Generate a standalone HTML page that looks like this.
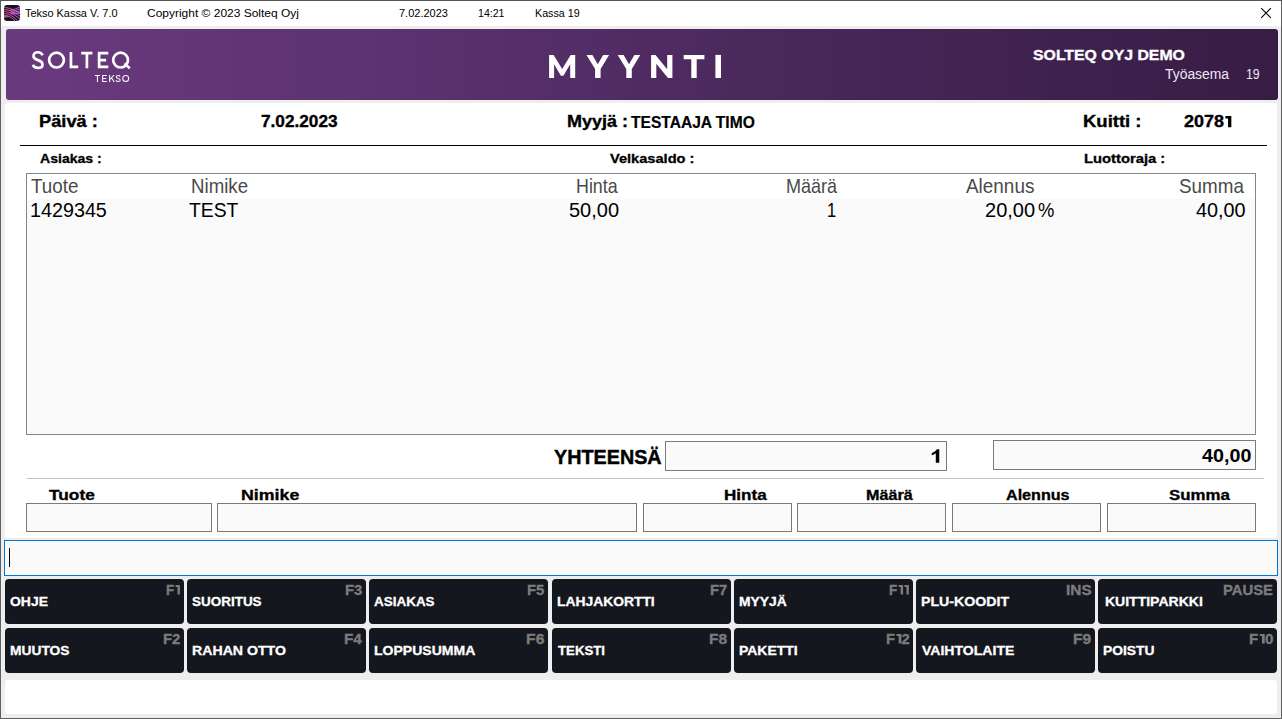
<!DOCTYPE html>
<html>
<head>
<meta charset="utf-8">
<title>Tekso Kassa</title>
<style>
*{box-sizing:border-box;margin:0;padding:0}
html,body{width:1282px;height:719px;overflow:hidden;background:#eee;font-family:"Liberation Sans",sans-serif;}
#win{position:absolute;left:0;top:0;width:1282px;height:719px;background:#eee;border:1px solid #5f5f5f;border-top-color:#555;overflow:hidden}
.abs{position:absolute}
.t{position:absolute;white-space:nowrap;line-height:1;transform-origin:0 0;display:inline-block}
#titlebar{position:absolute;left:0;top:0;width:1280px;height:25px;background:#fff}
#hdr{position:absolute;left:4.5px;top:28px;width:1272px;height:71px;border-radius:3px;background:linear-gradient(90deg,#6a3a7e 0%,#5c3270 30%,#4a285b 60%,#371c44 100%)}
#panel{position:absolute;left:4px;top:102px;width:1272px;height:435px;border-radius:3px;background:#fff}
#list{position:absolute;left:25px;top:172px;width:1230px;height:262px;border:1px solid #828790;background:#fafafa}
#list .hd{position:absolute;left:0;top:0;width:1228px;height:25px;background:#fff}
.box{position:absolute;border:1px solid #7a7a7a;background:#fafafa}
.btn{position:absolute;width:179px;height:45px;border-radius:4px;background:#15171e}
#cmd{position:absolute;left:3px;top:539px;width:1274px;height:36px;border:1px solid #0078d7;background:#fafafa}
#cmd i{position:absolute;left:4px;top:7px;width:1px;height:19px;background:#000}
#status{position:absolute;left:4px;top:679px;width:1272px;height:34px;border-radius:3px;background:#fff}
.one{display:inline-block;vertical-align:baseline;overflow:visible}
#ov{position:absolute;left:-1px;top:-1px;width:1282px;height:719px;pointer-events:none}
</style>
</head>
<body>
<div id="win">
  <div id="titlebar"></div>
  <div id="hdr"></div>
  <div id="panel"></div>
  <div class="abs" style="left:19px;top:144px;width:1247px;height:1px;background:#000"></div>
  <div id="list"><div class="hd"></div></div>
  <div class="box" style="left:664px;top:440px;width:282px;height:30px"></div>
  <div class="box" style="left:992px;top:439px;width:263px;height:30px"></div>
  <div class="abs" style="left:26px;top:477px;width:1237px;height:1px;background:#c0c0c0"></div>
  <div class="box" style="left:25px;top:502px;width:186px;height:29px"></div>
  <div class="box" style="left:216px;top:502px;width:420px;height:29px"></div>
  <div class="box" style="left:642px;top:502px;width:149px;height:29px"></div>
  <div class="box" style="left:796px;top:502px;width:149px;height:29px"></div>
  <div class="box" style="left:951px;top:502px;width:149px;height:29px"></div>
  <div class="box" style="left:1106px;top:502px;width:149px;height:29px"></div>
  <div id="cmd"><i></i></div>
<div class="btn" style="left:4px;top:578px"></div>
<div class="btn" style="left:186px;top:578px"></div>
<div class="btn" style="left:368px;top:578px"></div>
<div class="btn" style="left:551px;top:578px"></div>
<div class="btn" style="left:733px;top:578px"></div>
<div class="btn" style="left:915px;top:578px"></div>
<div class="btn" style="left:1097px;top:578px"></div>
<div class="btn" style="left:4px;top:627px"></div>
<div class="btn" style="left:186px;top:627px"></div>
<div class="btn" style="left:368px;top:627px"></div>
<div class="btn" style="left:551px;top:627px"></div>
<div class="btn" style="left:733px;top:627px"></div>
<div class="btn" style="left:915px;top:627px"></div>
<div class="btn" style="left:1097px;top:627px"></div>

  <div id="status"></div>

  <svg id="ov" viewBox="0 0 1282 719">
    <!-- app icon -->
    <defs>
      <linearGradient id="ig" x1="0" y1="0" x2="16" y2="0" gradientUnits="userSpaceOnUse"><stop offset="0" stop-color="#f0529f"/><stop offset="0.55" stop-color="#e25fd6"/><stop offset="1" stop-color="#d36bf0"/></linearGradient>
      <clipPath id="ic"><rect x="0" y="0" width="16" height="16" rx="3.2"/></clipPath>
      <radialGradient id="glow" cx="1" cy="11.3" r="5" gradientUnits="userSpaceOnUse"><stop offset="0" stop-color="#f0529f" stop-opacity="0.95"/><stop offset="1" stop-color="#f0529f" stop-opacity="0"/></radialGradient>
    </defs>
    <g transform="translate(4,5)" clip-path="url(#ic)">
      <rect x="0" y="0" width="16" height="16" fill="#16141c"/>
      <ellipse cx="1.5" cy="11.6" rx="4.5" ry="1.2" fill="url(#glow)"/>
      <g fill="none" stroke="url(#ig)" stroke-width="0.92">
<path d="M-0.5 2.60 C4.5 2.60,7.5 3.60,16.50 8.60"/>
<path d="M-0.5 4.60 C4.5 4.60,7.5 5.60,16.50 11.40"/>
<path d="M-0.5 6.60 C4.5 6.60,7.5 7.60,16.50 14.20"/>
<path d="M-0.5 8.60 C4.5 8.60,7.5 9.60,14.20 16.50"/>
<path d="M-0.5 10.60 C4.5 10.60,7.5 11.60,11.20 16.50"/>
<path d="M6.5 4.60 C10 5.00,12.5 3.30,16.5 1.80"/>
<path d="M6.5 5.90 C10 6.30,12.5 5.20,16.5 3.70"/>
<path d="M6.5 7.20 C10 7.60,12.5 7.10,16.5 5.60"/>
<path d="M6.5 8.50 C10 8.90,12.5 9.00,16.5 7.50"/>
      </g>
    </g>
    <!-- close X -->
    <path d="M1261.2 8.2 L1270.8 17.8 M1270.8 8.2 L1261.2 17.8" stroke="#000" stroke-width="1.1" fill="none"/>
    <!-- SOLTEQ logo -->
    <g fill="none" stroke="#fff" stroke-width="2.7">
      <path d="M42.6 55.3 C41.8 53.4 40 52.25 37.9 52.25 C35.3 52.25 33.5 53.8 33.5 56 C33.5 58.4 35.5 59.3 37.9 60.1 C40.6 61 42.5 62 42.5 64.4 C42.5 66.7 40.6 67.95 37.9 67.95 C35.4 67.95 33.6 66.8 32.9 64.8"/>
      <circle cx="56.5" cy="60.1" r="7.4"/>
      <path d="M70.95 51.9 V66.95 H78.2"/>
      <path d="M81.2 53.15 H92.4 M86.9 53.15 V68.2"/>
      <path d="M108.3 53.15 H99.1 V66.95 H108.3 M99.1 60.2 H106.1"/>
      <circle cx="120.6" cy="60.1" r="7.4"/>
      <path d="M124.6 63.4 L129.8 68.4"/>
    </g>
    <!-- TEKSO -->
    <g fill="none" stroke="#fff" stroke-width="1.05" stroke-opacity="0.96">
      <path d="M94.9 75.55 H100 M97.45 75.55 V82"/>
      <path d="M106.8 75.55 H102.65 V81.5 H106.8 M102.65 78.45 H106.2"/>
      <path d="M109.65 75 V82 M114 75.1 L109.9 79.5 M111.4 77.9 L114.3 82"/>
      <path d="M120.2 76.7 C119.8 75.9 119 75.55 118.1 75.55 C117 75.55 116.25 76.1 116.25 77 C116.25 78 117.1 78.3 118.1 78.6 C119.3 78.9 120.25 79.3 120.25 80.2 C120.25 81.1 119.3 81.5 118.1 81.5 C117 81.5 116.2 81.1 115.9 80.3"/>
      <circle cx="125.7" cy="78.5" r="3.0"/>
    </g>
    <!-- MYYNTI -->
    <g fill="#fff">
      <polygon points="549.1,78 549.1,54.9 553.6,54.9 562.15,69 570.7,54.9 575.2,54.9 575.2,78 570.2,78 570.2,64.3 563.4,75.7 560.9,75.7 554.1,64.3 554.1,78"/>
      <polygon points="586.5,54.9 592.4,54.9 597.8,64.3 603.2,54.9 609.1,54.9 600.6,68.9 600.6,78 595.1,78 595.1,68.9"/>
      <polygon points="617.7,54.9 623.6,54.9 629,64.3 634.4,54.9 640.3,54.9 631.8,68.9 631.8,78 626.3,78 626.3,68.9"/>
      <polygon points="651.1,78 651.1,54.9 655.5,54.9 667.2,69.2 667.2,54.9 672.4,54.9 672.4,78 668,78 656.3,63.7 656.3,78"/>
      <path d="M683.7 54.9 H704.4 V59.3 H696.7 V78 H691.3 V59.3 H683.7 Z"/>
      <rect x="715.4" y="54.9" width="5.6" height="23.1"/>
    </g>
  </svg>

<span class="t" id="tb1" style="left:23.72px;top:6.01px;font-size:11.7px;font-weight:normal;color:#000;transform:scaleX(0.9349);">Tekso Kassa V. 7.0</span>
<span class="t" id="tb2" style="left:145.52px;top:6.01px;font-size:11.7px;font-weight:normal;color:#000;transform:scaleX(1.0249);">Copyright © 2023 Solteq Oyj</span>
<span class="t" id="tb3" style="left:398.36px;top:6.01px;font-size:11.7px;font-weight:normal;color:#000;transform:scaleX(0.9411);">7.02.2023</span>
<span class="t" id="tb4" style="left:477.16px;top:6.01px;font-size:11.7px;font-weight:normal;color:#000;transform:scaleX(0.9061);">14:21</span>
<span class="t" id="tb5" style="left:534.01px;top:6.01px;font-size:11.7px;font-weight:normal;color:#000;transform:scaleX(0.9172);">Kassa 19</span>
<span class="t" id="demo" style="left:1032.15px;top:46.00px;font-size:15px;font-weight:bold;color:#fff;transform:scaleX(1.0555);;-webkit-text-stroke:0.33px #fff">SOLTEQ OYJ DEMO</span>
<span class="t" id="tyo" style="left:1163.53px;top:66.01px;font-size:14px;font-weight:normal;color:#eee6f2;transform:scaleX(0.9924);">Työasema</span>
<span class="t" id="tyon" style="left:1245.29px;top:66.01px;font-size:14px;font-weight:normal;color:#eee6f2;transform:scaleX(0.8791);">19</span>
<span class="t" id="paiva" style="left:38.44px;top:112.01px;font-size:16.5px;font-weight:bold;color:#000;transform:scaleX(1.1073);;-webkit-text-stroke:0.36px #000">Päivä :</span>
<span class="t" id="pvm" style="left:260.21px;top:112.01px;font-size:16.5px;font-weight:bold;color:#000;transform:scaleX(1.0423);;-webkit-text-stroke:0.36px #000">7.02.2023</span>
<span class="t" id="myyja" style="left:566.31px;top:112.01px;font-size:16.5px;font-weight:bold;color:#000;transform:scaleX(1.0890);;-webkit-text-stroke:0.36px #000">Myyjä :</span>
<span class="t" id="myyjan" style="left:630.29px;top:112.91px;font-size:16.5px;font-weight:bold;color:#000;transform:scaleX(0.9445);;-webkit-text-stroke:0.2px #000">TESTAAJA TIMO</span>
<span class="t" id="kuitti" style="left:1082.28px;top:112.01px;font-size:16.5px;font-weight:bold;color:#000;transform:scaleX(1.1203);;-webkit-text-stroke:0.36px #000">Kuitti :</span>
<span class="t" id="kuittin" style="left:1182.59px;top:112.01px;font-size:16.5px;font-weight:bold;color:#000;transform:scaleX(1.0901);;-webkit-text-stroke:0.36px #000">2078<svg class="one" viewBox="0 0 34 70" style="width:.33em;height:.688em;margin:0 .05em 0 .07em"><path fill="currentColor" d="M0 0H34V70H15V14.5H0Z"/></svg></span>
<span class="t" id="asiakas" style="left:38.60px;top:151.00px;font-size:13px;font-weight:bold;color:#000;transform:scaleX(1.0822);;-webkit-text-stroke:0.29px #000">Asiakas :</span>
<span class="t" id="velka" style="left:609.11px;top:151.00px;font-size:13px;font-weight:bold;color:#000;transform:scaleX(1.1237);;-webkit-text-stroke:0.29px #000">Velkasaldo :</span>
<span class="t" id="luotto" style="left:1083.06px;top:151.00px;font-size:13px;font-weight:bold;color:#000;transform:scaleX(1.1371);;-webkit-text-stroke:0.29px #000">Luottoraja :</span>
<span class="t" id="h1" style="left:29.91px;top:175.01px;font-size:20.3px;font-weight:normal;color:#4a4a4a;transform:scaleX(0.9288);">Tuote</span>
<span class="t" id="h2" style="left:190.09px;top:175.01px;font-size:20.3px;font-weight:normal;color:#4a4a4a;transform:scaleX(0.9205);">Nimike</span>
<span class="t" id="h3" style="left:575.32px;top:175.01px;font-size:20.3px;font-weight:normal;color:#4a4a4a;transform:scaleX(0.8792);">Hinta</span>
<span class="t" id="h4" style="left:785.32px;top:175.01px;font-size:20.3px;font-weight:normal;color:#4a4a4a;transform:scaleX(0.8892);">Määrä</span>
<span class="t" id="h5" style="left:965.09px;top:175.01px;font-size:20.3px;font-weight:normal;color:#4a4a4a;transform:scaleX(0.9326);">Alennus</span>
<span class="t" id="h6" style="left:1178.47px;top:175.01px;font-size:20.3px;font-weight:normal;color:#4a4a4a;transform:scaleX(0.9282);">Summa</span>
<span class="t" id="r1" style="left:29.31px;top:199.01px;font-size:20.3px;font-weight:normal;color:#000;transform:scaleX(0.9731);">1429345</span>
<span class="t" id="r2" style="left:187.58px;top:199.01px;font-size:20.3px;font-weight:normal;color:#000;transform:scaleX(0.9537);">TEST</span>
<span class="t" id="r3" style="left:568.24px;top:199.01px;font-size:20.3px;font-weight:normal;color:#000;transform:scaleX(0.9862);">50,00</span>
<span class="t" id="r4" style="left:826.28px;top:199.01px;font-size:20.3px;font-weight:normal;color:#000;transform:scaleX(0.8151);">1</span>
<span class="t" id="r5" style="left:984.43px;top:199.01px;font-size:20.3px;font-weight:normal;color:#000;transform:scaleX(0.9877);">20,00</span>
<span class="t" id="r5b" style="left:1037.27px;top:199.01px;font-size:20.3px;font-weight:normal;color:#000;transform:scaleX(0.9060);">%</span>
<span class="t" id="r6" style="left:1194.59px;top:199.01px;font-size:20.3px;font-weight:normal;color:#000;transform:scaleX(0.9773);">40,00</span>
<span class="t" id="yht" style="left:552.76px;top:446.25px;font-size:20.5px;font-weight:bold;color:#000;transform:scaleX(0.9640);;-webkit-text-stroke:0.45px #000">YHTEENSÄ</span>
<span class="t" id="yq" style="left:929.00px;top:446.01px;font-size:19px;font-weight:bold;color:#000;transform:scaleX(1.1854);"><svg class="one" viewBox="0 0 36 71.6" style="width:.36em;height:.737em;margin:0 .09em 0 .07em"><path fill="currentColor" d="M36 71.6H20.5V21Q12.5 28.5 2.5 32V19.5Q8.5 17.5 15.5 12Q22.5 6.5 25 0H36Z"/></svg></span>
<span class="t" id="ys" style="left:1201.05px;top:444.60px;font-size:19px;font-weight:bold;color:#000;transform:scaleX(1.0395);">40,00</span>
<span class="t" id="f1" style="left:48.46px;top:486.60px;font-size:14px;font-weight:bold;color:#000;transform:scaleX(1.2351);;-webkit-text-stroke:0.31px #000">Tuote</span>
<span class="t" id="f2" style="left:240.12px;top:486.60px;font-size:14px;font-weight:bold;color:#000;transform:scaleX(1.2706);;-webkit-text-stroke:0.31px #000">Nimike</span>
<span class="t" id="f3" style="left:723.43px;top:486.60px;font-size:14px;font-weight:bold;color:#000;transform:scaleX(1.2175);;-webkit-text-stroke:0.31px #000">Hinta</span>
<span class="t" id="f4" style="left:865.40px;top:486.60px;font-size:14px;font-weight:bold;color:#000;transform:scaleX(1.1536);;-webkit-text-stroke:0.31px #000">Määrä</span>
<span class="t" id="f5" style="left:1004.91px;top:486.61px;font-size:14px;font-weight:bold;color:#000;transform:scaleX(1.1500);;-webkit-text-stroke:0.31px #000">Alennus</span>
<span class="t" id="f6" style="left:1168.21px;top:486.60px;font-size:14px;font-weight:bold;color:#000;transform:scaleX(1.2034);;-webkit-text-stroke:0.31px #000">Summa</span>
<span class="t" id="bl0" style="left:8.61px;top:594.00px;font-size:13px;font-weight:bold;color:#fff;transform:scaleX(1.0721);;-webkit-text-stroke:0.29px #fff">OHJE</span>
<span class="t" id="bk0" style="left:164.87px;top:581.81px;font-size:14px;font-weight:bold;color:#7c7c7c;transform:scaleX(0.9516);;-webkit-text-stroke:0.31px #7c7c7c">F<svg class="one" viewBox="0 0 34 70" style="width:.33em;height:.688em;margin:0 .05em 0 .07em"><path fill="currentColor" d="M0 0H34V70H15V14.5H0Z"/></svg></span>
<span class="t" id="bl1" style="left:190.78px;top:594.00px;font-size:13px;font-weight:bold;color:#fff;transform:scaleX(1.0362);;-webkit-text-stroke:0.29px #fff">SUORITUS</span>
<span class="t" id="bk1" style="left:343.83px;top:581.81px;font-size:14px;font-weight:bold;color:#7c7c7c;transform:scaleX(1.0642);;-webkit-text-stroke:0.31px #7c7c7c">F3</span>
<span class="t" id="bl2" style="left:372.72px;top:594.00px;font-size:13px;font-weight:bold;color:#fff;transform:scaleX(1.0355);;-webkit-text-stroke:0.29px #fff">ASIAKAS</span>
<span class="t" id="bk2" style="left:525.99px;top:581.81px;font-size:14px;font-weight:bold;color:#7c7c7c;transform:scaleX(1.0607);;-webkit-text-stroke:0.31px #7c7c7c">F5</span>
<span class="t" id="bl3" style="left:555.60px;top:594.00px;font-size:13px;font-weight:bold;color:#fff;transform:scaleX(1.0651);;-webkit-text-stroke:0.29px #fff">LAHJAKORTTI</span>
<span class="t" id="bk3" style="left:708.66px;top:581.81px;font-size:14px;font-weight:bold;color:#7c7c7c;transform:scaleX(1.0531);;-webkit-text-stroke:0.31px #7c7c7c">F7</span>
<span class="t" id="bl4" style="left:738.40px;top:594.00px;font-size:13px;font-weight:bold;color:#fff;transform:scaleX(1.0648);;-webkit-text-stroke:0.29px #fff">MYYJÄ</span>
<span class="t" id="bk4" style="left:888.16px;top:581.81px;font-size:14px;font-weight:bold;color:#7c7c7c;transform:scaleX(0.9653);;-webkit-text-stroke:0.31px #7c7c7c">F<svg class="one" viewBox="0 0 34 70" style="width:.33em;height:.688em;margin:0 .05em 0 .07em"><path fill="currentColor" d="M0 0H34V70H15V14.5H0Z"/></svg><svg class="one" viewBox="0 0 34 70" style="width:.33em;height:.688em;margin:0 .05em 0 .07em"><path fill="currentColor" d="M0 0H34V70H15V14.5H0Z"/></svg></span>
<span class="t" id="bl5" style="left:920.23px;top:594.00px;font-size:13px;font-weight:bold;color:#fff;transform:scaleX(1.0905);;-webkit-text-stroke:0.29px #fff">PLU-KOODIT</span>
<span class="t" id="bk5" style="left:1065.24px;top:581.81px;font-size:14px;font-weight:bold;color:#7c7c7c;transform:scaleX(1.0990);;-webkit-text-stroke:0.31px #7c7c7c">INS</span>
<span class="t" id="bl6" style="left:1103.99px;top:594.00px;font-size:13px;font-weight:bold;color:#fff;transform:scaleX(1.0774);;-webkit-text-stroke:0.29px #fff">KUITTIPARKKI</span>
<span class="t" id="bk6" style="left:1221.86px;top:581.81px;font-size:14px;font-weight:bold;color:#7c7c7c;transform:scaleX(1.0584);;-webkit-text-stroke:0.31px #7c7c7c">PAUSE</span>
<span class="t" id="bl7" style="left:9.12px;top:643.00px;font-size:13px;font-weight:bold;color:#fff;transform:scaleX(1.0614);;-webkit-text-stroke:0.29px #fff">MUUTOS</span>
<span class="t" id="bk7" style="left:162.05px;top:631.01px;font-size:14px;font-weight:bold;color:#7c7c7c;transform:scaleX(1.0647);;-webkit-text-stroke:0.31px #7c7c7c">F2</span>
<span class="t" id="bl8" style="left:190.95px;top:643.00px;font-size:13px;font-weight:bold;color:#fff;transform:scaleX(1.0877);;-webkit-text-stroke:0.29px #fff">RAHAN OTTO</span>
<span class="t" id="bk8" style="left:342.79px;top:631.01px;font-size:14px;font-weight:bold;color:#7c7c7c;transform:scaleX(1.0929);;-webkit-text-stroke:0.31px #7c7c7c">F4</span>
<span class="t" id="bl9" style="left:372.50px;top:643.00px;font-size:13px;font-weight:bold;color:#fff;transform:scaleX(1.0794);;-webkit-text-stroke:0.29px #fff">LOPPUSUMMA</span>
<span class="t" id="bk9" style="left:524.83px;top:631.01px;font-size:14px;font-weight:bold;color:#7c7c7c;transform:scaleX(1.1255);;-webkit-text-stroke:0.31px #7c7c7c">F6</span>
<span class="t" id="bl10" style="left:557.00px;top:643.00px;font-size:13px;font-weight:bold;color:#fff;transform:scaleX(1.0167);;-webkit-text-stroke:0.29px #fff">TEKSTI</span>
<span class="t" id="bk10" style="left:708.18px;top:631.01px;font-size:14px;font-weight:bold;color:#7c7c7c;transform:scaleX(1.1062);;-webkit-text-stroke:0.31px #7c7c7c">F8</span>
<span class="t" id="bl11" style="left:738.36px;top:643.00px;font-size:13px;font-weight:bold;color:#fff;transform:scaleX(1.0742);;-webkit-text-stroke:0.29px #fff">PAKETTI</span>
<span class="t" id="bk11" style="left:884.91px;top:631.01px;font-size:14px;font-weight:bold;color:#7c7c7c;transform:scaleX(1.0535);;-webkit-text-stroke:0.31px #7c7c7c">F<svg class="one" viewBox="0 0 34 70" style="width:.33em;height:.688em;margin:0 .05em 0 .07em"><path fill="currentColor" d="M0 0H34V70H15V14.5H0Z"/></svg>2</span>
<span class="t" id="bl12" style="left:920.89px;top:643.00px;font-size:13px;font-weight:bold;color:#fff;transform:scaleX(1.0803);;-webkit-text-stroke:0.29px #fff">VAIHTOLAITE</span>
<span class="t" id="bk12" style="left:1072.00px;top:631.01px;font-size:14px;font-weight:bold;color:#7c7c7c;transform:scaleX(1.1155);;-webkit-text-stroke:0.31px #7c7c7c">F9</span>
<span class="t" id="bl13" style="left:1101.86px;top:643.00px;font-size:13px;font-weight:bold;color:#fff;transform:scaleX(1.0650);;-webkit-text-stroke:0.29px #fff">POISTU</span>
<span class="t" id="bk13" style="left:1247.86px;top:631.01px;font-size:14px;font-weight:bold;color:#7c7c7c;transform:scaleX(1.0766);;-webkit-text-stroke:0.31px #7c7c7c">F<svg class="one" viewBox="0 0 34 70" style="width:.33em;height:.688em;margin:0 .05em 0 .07em"><path fill="currentColor" d="M0 0H34V70H15V14.5H0Z"/></svg>0</span>
</div>
</body>
</html>
